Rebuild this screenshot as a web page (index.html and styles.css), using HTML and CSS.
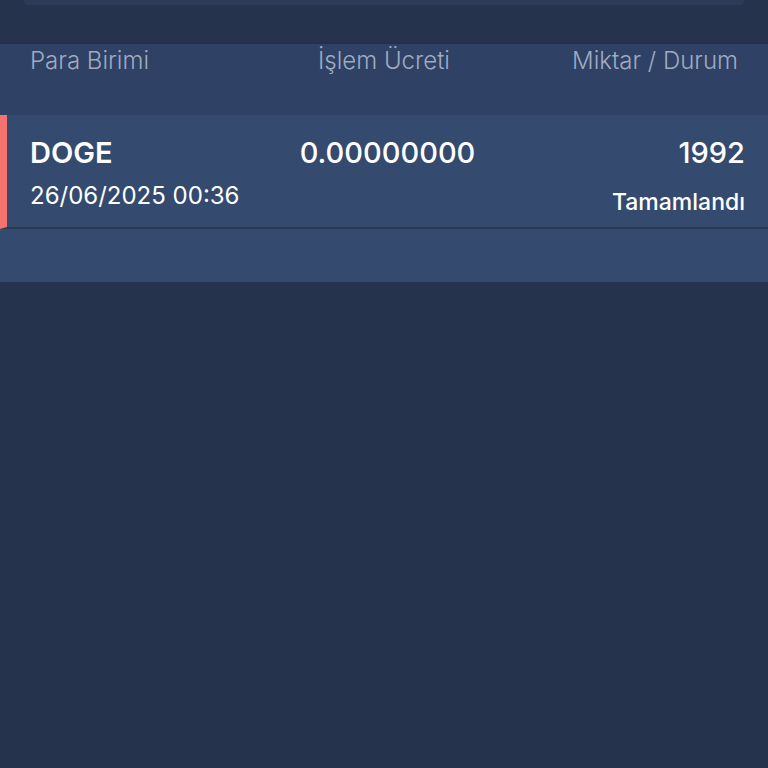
FILE: index.html
```html
<!DOCTYPE html>
<html lang="tr">
<head>
    <meta charset="UTF-8">
    <meta name="viewport" content="width=device-width, initial-scale=1.0">
    <title>İşlem Geçmişi</title>
    <link rel="stylesheet" href="styles.css">
</head>
<body>
    <div class="search-box"></div>

    <div class="table-head">
        <span class="col-left">Para Birimi</span>
        <span class="col-mid">İşlem Ücreti</span>
        <span class="col-right">Miktar / Durum</span>
    </div>

    <div class="tx-row">
        <div class="col-left">
            <div class="tx-coin">DOGE</div>
            <div class="tx-date">26/06/2025 00:36</div>
        </div>
        <div class="col-mid">
            <div class="tx-fee">0.00000000</div>
        </div>
        <div class="col-right">
            <div class="tx-amount">1992</div>
            <div class="tx-status">Tamamlandı</div>
        </div>
    </div>

    <div class="list-foot"></div>
</body>
</html>
```

FILE: styles.css
```css
body {
    margin: 0;
    background-color: #26334d;
    font-family: Inter, "Noto Sans", sans-serif;
    color: #fff;
}
.search-box {
    height: 5px;
    margin: 0 24px;
    background-color: #2d3b58;
    border-radius: 0 0 4px 4px;
}
.table-head {
    margin-top: 37px;
    height: 73px;
    padding: 3px 30px 0;
    box-sizing: border-box;
    display: grid;
    grid-template-columns: 1fr 1fr 1fr;
    background-color: #2f4164;
    border-top: 2px solid #24304a;
    color: #9eabc2;
    font-size: 24px;
    font-weight: 300;
    line-height: 28px;
}
.col-left {
    text-align: left;
}
.col-mid {
    text-align: center;
}
.col-right {
    text-align: right;
}
.tx-row {
    height: 114px;
    box-sizing: border-box;
    padding: 21px 23px 0 23px;
    display: grid;
    grid-template-columns: 1fr 1fr 1fr;
    background-color: #344a6e;
    border-left: 7px solid #f4736f;
    border-bottom: 2px solid #2a3a57;
}
.tx-coin,
.tx-fee,
.tx-amount {
    font-size: 29px;
    font-weight: 600;
    line-height: 34px;
}
.tx-fee,
.tx-amount {
    font-weight: 500;
}
.tx-date {
    margin-top: 12px;
    font-size: 24px;
    font-weight: 400;
    line-height: 28px;
}
.tx-status {
    margin-top: 18px;
    font-size: 23px;
    font-weight: 500;
    line-height: 28px;
}
.list-foot {
    height: 53px;
    background-color: #344a6e;
}
```
